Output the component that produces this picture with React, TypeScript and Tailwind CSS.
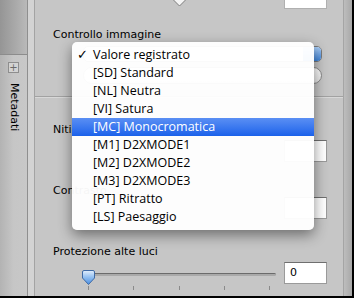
const menuItems = [
  { text: "Valore registrato", checked: true },
  { text: "[SD] Standard" },
  { text: "[NL] Neutra" },
  { text: "[VI] Satura" },
  { text: "[MC] Monocromatica", active: true },
  { text: "[M1] D2XMODE1" },
  { text: "[M2] D2XMODE2" },
  { text: "[M3] D2XMODE3" },
  { text: "[PT] Ritratto" },
  { text: "[LS] Paesaggio" },
];

function Sidebar() {
  return (
    <div className="flex w-[27px] flex-col">
      <div className="h-[55px] border-b border-[#8c8c8c] bg-gradient-to-r from-[#959595] to-[#b9b9b9]" />
      <div className="flex flex-1 flex-col items-center bg-gradient-to-r from-[#b3b3b3] via-[#c6c6c6] to-[#c8c8c8]">
        <div className="mt-[7px] flex h-[11px] w-[11px] items-center justify-center border border-[#8e8e8e] bg-[#d3d3d3] text-[10px] leading-none text-[#6a6a6a]">
          +
        </div>
        <div className="mt-[10px] text-[11px] leading-[14px] text-black [writing-mode:vertical-rl]">Metadati</div>
      </div>
    </div>
  );
}

function Field({ value }: { value?: string }) {
  return (
    <div className="h-[22px] w-[43px] border border-[#9a9a9a] border-t-[#6f6f6f] bg-white pl-[5px] text-[11px] leading-[20px] text-black">
      {value}
    </div>
  );
}

function Label({ children, className }: { children: string; className: string }) {
  return <div className={`text-[11px] leading-[14px] text-black ${className}`}>{children}</div>;
}

function Thumb() {
  return (
    <svg width="13" height="16" viewBox="0 0 13 16">
      <defs>
        <linearGradient id="th" x1="0" y1="0" x2="0" y2="1">
          <stop offset="0" stopColor="#e3effc" />
          <stop offset="0.5" stopColor="#8fbdf0" />
          <stop offset="1" stopColor="#4b8ee0" />
        </linearGradient>
      </defs>
      <path d="M2 0.5 h9 a1.5 1.5 0 0 1 1.5 1.5 v6 l-6 6.5 l-6 -6.5 v-6 a1.5 1.5 0 0 1 1.5 -1.5z" fill="url(#th)" stroke="#3f6aa5" />
    </svg>
  );
}

function Menu() {
  return (
    <div className="absolute left-[37px] top-[42px] h-[188px] w-[242px] rounded-[5px] bg-white/[0.96] py-[4px] font-['Open_Sans',sans-serif] shadow-[0_5px_14px_rgba(0,0,0,0.45)]">
      {menuItems.map((m) => (
        <div
          key={m.text}
          className={`flex h-[18px] items-center text-[12.5px] ${
            m.active ? "bg-gradient-to-b from-[#5a8ff4] to-[#1a61ea] text-white" : "text-black"
          }`}
        >
          <span className="w-[21px] text-center">{m.checked ? "✓" : ""}</span>
          <span>{m.text}</span>
        </div>
      ))}
    </div>
  );
}

function Main() {
  return (
    <div className="relative flex w-[308px] flex-col bg-[#c6c6c6] pl-[18px] pr-[16px]">
      <div className="flex h-[10px] items-start">
        <svg className="ml-[120px]" width="13" height="7" viewBox="0 0 13 7">
          <path d="M0.5 0 L6.5 6 L12.5 0" fill="#f4f4f4" stroke="#7d7d7d" />
        </svg>
        <div className="ml-auto h-[9px] w-[43px] border-x border-b border-[#b0b0b0] bg-white" />
      </div>
      <Label className="mt-[18px]">Controllo immagine</Label>
      <div className="ml-[30px] mr-[5px] mt-[4px] flex h-[16px] overflow-hidden rounded-[5px] border border-[#7a7a7a] bg-white">
        <div className="flex-1" />
        <div className="w-[18px] bg-gradient-to-b from-[#a9cdf6] to-[#3e86dc]" />
      </div>
      <div className="ml-[30px] mr-[5px] mt-[5px] h-[17px] rounded-full border border-[#8a8a8a] bg-gradient-to-b from-white to-[#e6e6e6]" />
      <div className="-ml-[18px] -mr-[16px] mt-[12px] h-[2px] border-t border-b border-t-[#a2a2a2] border-b-[#d8d8d8]" />
      <Label className="mt-[25px]">Nitidezza</Label>
      <div className="mt-[3px] flex h-[22px] justify-end">
        <Field />
      </div>
      <Label className="mt-[22px]">Contrasto</Label>
      <div className="-mt-[1px] flex h-[22px] justify-end">
        <Field />
      </div>
      <Label className="mt-[26px]">Protezione alte luci</Label>
      <div className="mt-[3px] flex h-[22px] items-start">
        <div className="relative ml-[29px] w-[194px]">
          <div className="ml-[6px] mt-[11px] h-[3px] rounded-full border-t border-[#6b6b6b] bg-[#a9a9a9]" />
          <div className="absolute left-0 top-[8px]">
            <Thumb />
          </div>
          <div className="mt-[10px] flex justify-between px-[6px]">
            {[0, 1, 2, 3, 4].map((t) => (
              <div key={t} className="h-[4px] w-px bg-[#8a8a8a]" />
            ))}
          </div>
        </div>
        <div className="ml-auto">
          <Field value="0" />
        </div>
      </div>
      <Menu />
    </div>
  );
}

export default function App() {
  return (
    <div className="flex h-[298px] w-[354px] flex-col overflow-hidden bg-black font-['DejaVu_Sans',sans-serif]">
      <div className="flex h-[296px]">
        <Sidebar />
        <div className="w-[8px] border-x border-l-[#8f8f8f] border-r-[#a3a3a3] bg-[#d3d3d3]" />
        <Main />
        <div className="w-[9px] border-l border-[#a5a5a5] bg-gradient-to-r from-[#bdbdbd] to-[#a8a8a8]" />
        <div className="w-[2px] bg-black" />
      </div>
      <div className="h-[2px] bg-black" />
    </div>
  );
}
